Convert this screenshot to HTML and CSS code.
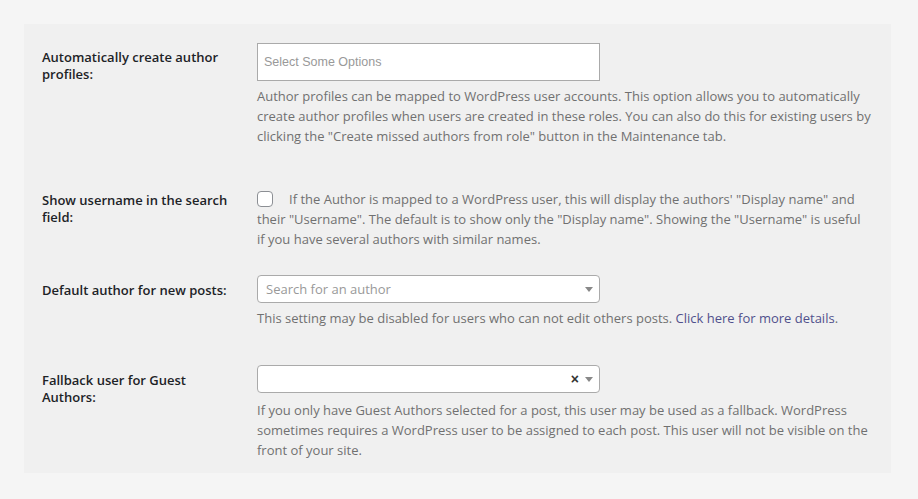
FILE: index.html
```html
<!DOCTYPE html>
<html lang="en">
<head>
    <meta charset="UTF-8">
    <title>Author settings</title>
    <link rel="stylesheet" href="styles.css">
</head>
<body>

<div class="panel">
    <div class="row">
        <div class="label">Automatically create author profiles:</div>
        <div class="field">
            <div class="chosen">Select Some Options</div>
            <p class="description">Author profiles can be mapped to WordPress user accounts. This option allows you to automatically create author profiles when users are created in these roles. You can also do this for existing users by clicking the "Create missed authors from role" button in the Maintenance tab.</p>
        </div>
    </div>

    <div class="row row-check">
        <div class="label">Show username in the search field:</div>
        <div class="field">
            <p class="description"><span class="checkbox"></span>If the Author is mapped to a WordPress user, this will display the authors' "Display name" and their "Username". The default is to show only the "Display name". Showing the "Username" is useful if you have several authors with similar names.</p>
        </div>
    </div>

    <div class="row row-default">
        <div class="label">Default author for new posts:</div>
        <div class="field">
            <div class="select2">
                <span class="placeholder">Search for an author</span>
                <span class="arrow"></span>
            </div>
            <p class="description">This setting may be disabled for users who can not edit others posts. <a href="#">Click here for more details</a>.</p>
        </div>
    </div>

    <div class="row row-fallback">
        <div class="label">Fallback user for Guest Authors:</div>
        <div class="field">
            <div class="select2">
                <span class="placeholder"></span>
                <span class="clear">&times;</span>
                <span class="arrow"></span>
            </div>
            <p class="description">If you only have Guest Authors selected for a post, this user may be used as a fallback. WordPress sometimes requires a WordPress user to be assigned to each post. This user will not be visible on the front of your site.</p>
        </div>
    </div>
</div>

</body>
</html>
```

FILE: styles.css
```css
* {
    box-sizing: border-box;
}

body {
    margin: 0;
    padding: 24px 27px 27px 24px;
    background-color: #f5f5f5;
    font-family: "Open Sans", "Noto Sans", sans-serif;
    color: #1d2327;
}

.panel {
    background-color: #f0f0f0;
    padding: 19px 14px 13px 18px;
}

.row {
    display: flex;
    align-items: flex-start;
}

.label {
    width: 215px;
    padding: 6px 27px 0 0;
    font-size: 13px;
    font-weight: 600;
    line-height: 17px;
}

.field {
    flex: 1;
    padding-right: 6px;
}

.chosen {
    width: 343px;
    height: 38px;
    padding: 0 6px;
    border: 1px solid #aaa;
    background-color: #fff;
    font-family: "Liberation Sans", Arial, sans-serif;
    font-size: 12.5px;
    line-height: 36px;
    color: #999;
}

.description {
    margin: 5px 0 0;
    font-size: 13px;
    line-height: 20px;
    color: #707070;
}

.description a {
    color: #50508c;
    text-decoration: none;
}

.row-check {
    margin-top: 43px;
}

.row-check .label {
    padding-top: 3px;
}

.row-check .description {
    margin-top: 0;
}

.checkbox {
    display: inline-block;
    width: 16px;
    height: 16px;
    margin: 0 16px 0 0;
    border: 1px solid #8c8f94;
    border-radius: 4px;
    background-color: #fff;
    vertical-align: -3px;
}

.row-default {
    margin-top: 26px;
}

.row-default .label {
    padding-top: 7px;
}

.row-fallback {
    margin-top: 37px;
}

.row-fallback .label {
    padding-top: 7px;
}

.row-fallback .description {
    margin-top: 7px;
}

.select2 {
    display: flex;
    align-items: center;
    width: 343px;
    height: 28px;
    padding: 0 6px 0 8px;
    border: 1px solid #aaa;
    border-radius: 4px;
    background-color: #fff;
    font-size: 13px;
}

.placeholder {
    flex: 1;
    color: #999;
}

.clear {
    margin-right: 6px;
    font-family: "Liberation Sans", Arial, sans-serif;
    font-size: 14px;
    font-weight: bold;
    color: #333;
}

.arrow {
    width: 0;
    height: 0;
    border-left: 4px solid transparent;
    border-right: 4px solid transparent;
    border-top: 5px solid #888;
}
```
